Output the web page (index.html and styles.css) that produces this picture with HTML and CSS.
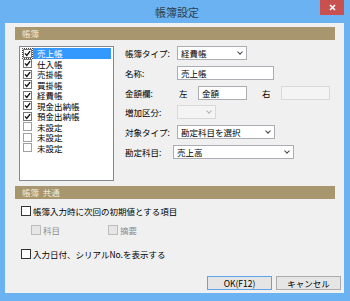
FILE: index.html
```html
<!DOCTYPE html>
<html lang="ja">
<head>
    <meta charset="UTF-8">
    <title>帳簿設定</title>
    <link rel="stylesheet" href="styles.css">
</head>
<body>
<div class="window">
    <div class="titlebar">
        <span></span>
        <span class="title">帳簿設定</span>
        <span class="close">
            <svg width="7" height="7" viewBox="0 0 7 7"><path d="M1 1L6 6M6 1L1 6" stroke="#fff" stroke-width="1.6"/></svg>
        </span>
    </div>
    <div class="client">
        <div class="section-head">帳簿</div>
        <div class="upper">
            <ul class="ledger-list">
                <li class="selected"><span class="cb checked focus"><svg viewBox="0 0 8 8"><path d="M1.2 3.8L3.2 6.2L7 1.2" stroke="#111" stroke-width="1.6" fill="none"/></svg></span><span class="name">売上帳</span></li>
                <li><span class="cb checked"><svg viewBox="0 0 8 8"><path d="M1.2 3.8L3.2 6.2L7 1.2" stroke="#111" stroke-width="1.6" fill="none"/></svg></span><span class="name">仕入帳</span></li>
                <li><span class="cb checked"><svg viewBox="0 0 8 8"><path d="M1.2 3.8L3.2 6.2L7 1.2" stroke="#111" stroke-width="1.6" fill="none"/></svg></span><span class="name">売掛帳</span></li>
                <li><span class="cb checked"><svg viewBox="0 0 8 8"><path d="M1.2 3.8L3.2 6.2L7 1.2" stroke="#111" stroke-width="1.6" fill="none"/></svg></span><span class="name">買掛帳</span></li>
                <li><span class="cb checked"><svg viewBox="0 0 8 8"><path d="M1.2 3.8L3.2 6.2L7 1.2" stroke="#111" stroke-width="1.6" fill="none"/></svg></span><span class="name">経費帳</span></li>
                <li><span class="cb checked"><svg viewBox="0 0 8 8"><path d="M1.2 3.8L3.2 6.2L7 1.2" stroke="#111" stroke-width="1.6" fill="none"/></svg></span><span class="name">現金出納帳</span></li>
                <li><span class="cb checked"><svg viewBox="0 0 8 8"><path d="M1.2 3.8L3.2 6.2L7 1.2" stroke="#111" stroke-width="1.6" fill="none"/></svg></span><span class="name">預金出納帳</span></li>
                <li><span class="cb"></span><span class="name">未設定</span></li>
                <li><span class="cb"></span><span class="name">未設定</span></li>
                <li><span class="cb"></span><span class="name">未設定</span></li>
            </ul>
            <div class="fields">
                <div class="row">
                    <label>帳簿タイプ:</label>
                    <div class="select w-type">経費帳<span class="chev"></span></div>
                </div>
                <div class="row">
                    <label>名称:</label>
                    <div class="input w-name">売上帳</div>
                </div>
                <div class="row">
                    <label>金額欄:</label>
                    <span class="side">左</span>
                    <div class="input w-amount">金額</div>
                    <span class="side side-right">右</span>
                    <div class="input disabled w-amount"></div>
                </div>
                <div class="row">
                    <label>増加区分:</label>
                    <div class="select disabled w-inc"><span class="chev"></span></div>
                </div>
                <div class="row">
                    <label>対象タイプ:</label>
                    <div class="select w-target">勘定科目を選択<span class="chev"></span></div>
                </div>
                <div class="row">
                    <label>勘定科目:</label>
                    <div class="select w-account">売上高<span class="chev"></span></div>
                </div>
            </div>
        </div>
        <div class="section-head">帳簿&nbsp;&nbsp;共通</div>
        <div class="common">
            <div class="check-row"><span class="box"></span>帳簿入力時に次回の初期値とする項目</div>
            <div class="sub-row">
                <div class="check-row disabled"><span class="box"></span>科目</div>
                <div class="check-row disabled"><span class="box"></span>摘要</div>
            </div>
            <div class="check-row last"><span class="box"></span>入力日付、シリアルNo.を表示する</div>
        </div>
        <div class="buttons">
            <button class="btn default">OK(F12)</button>
            <button class="btn">キャンセル</button>
        </div>
    </div>
</div>
</body>
</html>
```

FILE: styles.css
```css
body {
    margin: 0;
    font-family: "Noto Sans CJK JP", "Noto Sans", sans-serif;
    font-size: 8.5px;
    color: #000;
}
.window {
    width: 350px;
    height: 301px;
    background: #6ab2f2;
    box-sizing: border-box;
    padding: 0 6px 8px 5px;
    display: flex;
    flex-direction: column;
}
.titlebar {
    height: 23px;
    display: grid;
    grid-template-columns: 1fr auto 1fr;
    margin-right: -5px;
}
.title {
    font-size: 11px;
    color: #2d3e50;
    line-height: 24px;
}
.close {
    justify-self: end;
    margin-right: 5px;
    width: 24px;
    height: 15px;
    background: #c8504f;
    display: flex;
    align-items: center;
    justify-content: center;
}
.client {
    flex: 1;
    background: #f0f0f0;
    padding: 4px 9px 0 10px;
    display: flex;
    flex-direction: column;
}
.section-head {
    height: 13px;
    line-height: 13px;
    background: #a8966f;
    color: #f0ead9;
    padding-left: 7px;
}
.upper {
    display: flex;
    margin-top: 6px;
    margin-bottom: 5px;
}
.ledger-list {
    list-style: none;
    margin: 0 0 0 4px;
    padding: 1px 2px 0 2px;
    width: 95px;
    height: 135px;
    box-sizing: border-box;
    background: #fff;
    border: 1px solid #828790;
}
.ledger-list li {
    height: 10.5px;
    display: flex;
    align-items: center;
}
.cb {
    width: 7px;
    height: 7px;
    border: 1px solid #a0a0a0;
    background: #fff;
    flex-shrink: 0;
    display: flex;
    margin-left: 1px;
}
.cb svg {
    width: 7px;
    height: 7px;
}
.cb.checked {
    border-color: #777;
}
.cb.focus {
    outline: 1px dotted #444;
}
.name {
    flex: 1;
    padding-left: 4px;
    margin-left: 1px;
    line-height: 10.5px;
}
.selected .name {
    background: #3399ff;
    color: #fff;
}
.fields {
    margin-left: 11px;
    display: flex;
    flex-direction: column;
    gap: 5.8px;
}
.row {
    display: flex;
    align-items: center;
    height: 14px;
}
.row label {
    width: 52px;
    flex-shrink: 0;
}
.select, .input {
    height: 14px;
    box-sizing: border-box;
    background: #fff;
    border: 1px solid #abadb3;
    padding-left: 3px;
    line-height: 12px;
    position: relative;
}
.select .chev {
    position: absolute;
    right: 4px;
    top: 3px;
    width: 3px;
    height: 3px;
    border: solid #444;
    border-width: 0 1px 1px 0;
    transform: rotate(45deg);
}
.disabled.select, .disabled.input {
    background: #f4f4f4;
    border-color: #d9d9d9;
}
.disabled .chev {
    border-color: #b0b0b0;
}
.w-type { width: 70px; }
.w-name { width: 97px; }
.w-amount { width: 49px; }
.w-inc { width: 39px; }
.w-target { width: 98px; }
.w-account { width: 121px; margin-left: -4px; }
.side {
    width: 9px;
    margin: 0 10px 0 2px;
}
.side-right {
    margin: 0 10px 0 15px;
}
.common {
    padding-left: 6px;
    margin-top: 7px;
}
.check-row {
    display: flex;
    align-items: center;
    height: 10px;
}
.box {
    width: 8px;
    height: 8px;
    border: 1px solid #333;
    background: #fff;
    margin-right: 2px;
}
.sub-row {
    display: flex;
    margin: 9px 0 0 10px;
    gap: 48px;
}
.check-row.disabled {
    color: #8d8d8d;
}
.check-row.disabled .box {
    border-color: #bcbcbc;
    background: #e6e6e6;
}
.check-row.last {
    margin-top: 14px;
}
.buttons {
    display: flex;
    justify-content: flex-end;
    gap: 4px;
    margin: 17px -6px 0 0;
}
.btn {
    width: 65px;
    height: 14px;
    padding: 0;
    font-family: inherit;
    font-size: 8.5px;
    background: #e5e5e5;
    border: 1px solid #acacac;
    line-height: 12px;
}
.btn.default {
    border-color: #5ea4e6;
}
```
